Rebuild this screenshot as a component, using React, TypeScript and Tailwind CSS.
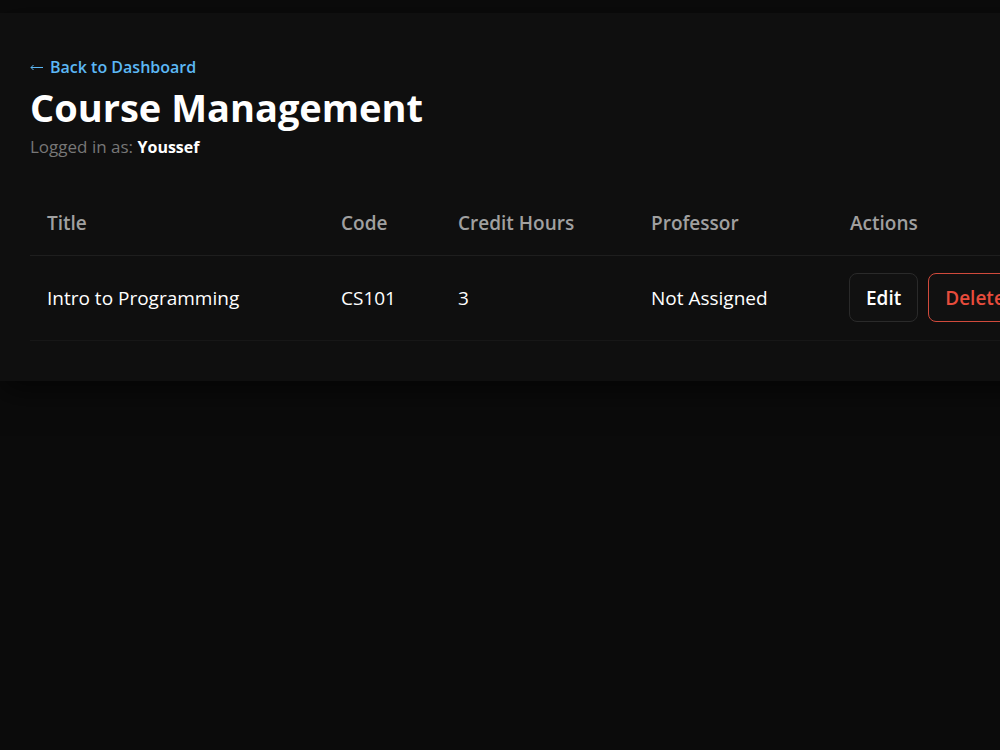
const courses = [
  { title: "Intro to Programming", code: "CS101", hours: 3, professor: "Not Assigned" },
];

export default function App() {
  return (
    <div className="min-h-screen overflow-hidden bg-[#0b0b0b] pt-[13px] font-['Open_Sans','Noto_Sans',sans-serif] text-white">
      <main className="w-max min-w-full bg-[#0f0f0f] px-[30px] pt-10 pb-10 shadow-[0_10px_30px_rgba(0,0,0,0.6)]">
        <header>
          <a href="#dashboard" className="inline-flex items-center gap-[6px] text-base leading-7 font-semibold text-[#5cb8f5]">
            <svg viewBox="0 0 14 10" className="h-[10px] w-[14px]" fill="none" stroke="currentColor" aria-hidden="true">
              <path d="M13 5.5H1M3.5 3L1 5.5L3.5 8" />
            </svg>
            Back to Dashboard
          </a>
          <h1 className="mt-[2px] text-[38px] leading-12 font-bold">Course Management</h1>
          <p className="mt-1 text-[17px] leading-6 text-[#777777]">
            Logged in as: <strong className="text-base text-white">Youssef</strong>
          </p>
        </header>
        <table className="mt-8 w-[1060px] table-fixed border-collapse text-left text-[19px]">
          <colgroup>
            <col className="w-[294px]" />
            <col className="w-[117px]" />
            <col className="w-[193px]" />
            <col className="w-[199px]" />
            <col />
          </colgroup>
          <thead>
            <tr className="h-16 border-b border-[#1e1e1e] text-[#a0a0a0]">
              <th className="px-[17px] font-semibold">Title</th>
              <th className="px-[17px] font-semibold">Code</th>
              <th className="px-[17px] font-semibold">Credit Hours</th>
              <th className="px-[17px] font-semibold">Professor</th>
              <th className="px-[17px] font-semibold">Actions</th>
            </tr>
          </thead>
          <tbody>
            {courses.map((course) => (
              <tr key={course.code} className="h-[85px] border-b border-[#171717]">
                <td className="px-[17px] pt-[2px]">{course.title}</td>
                <td className="px-[17px] pt-[2px]">{course.code}</td>
                <td className="px-[17px] pt-[2px]">{course.hours}</td>
                <td className="px-[17px] pt-[2px]">{course.professor}</td>
                <td className="px-4">
                  <div className="flex gap-[10px]">
                    <button type="button" className="h-[49px] rounded-lg border border-[#2a2a2a] bg-[#111111] px-4 pt-[2px] font-semibold">
                      Edit
                    </button>
                    <button type="button" className="h-[49px] rounded-lg border border-[#d04a3c] bg-[#111111] px-4 pt-[2px] font-semibold text-[#e74c3c]">
                      Delete
                    </button>
                  </div>
                </td>
              </tr>
            ))}
          </tbody>
        </table>
      </main>
    </div>
  );
}
